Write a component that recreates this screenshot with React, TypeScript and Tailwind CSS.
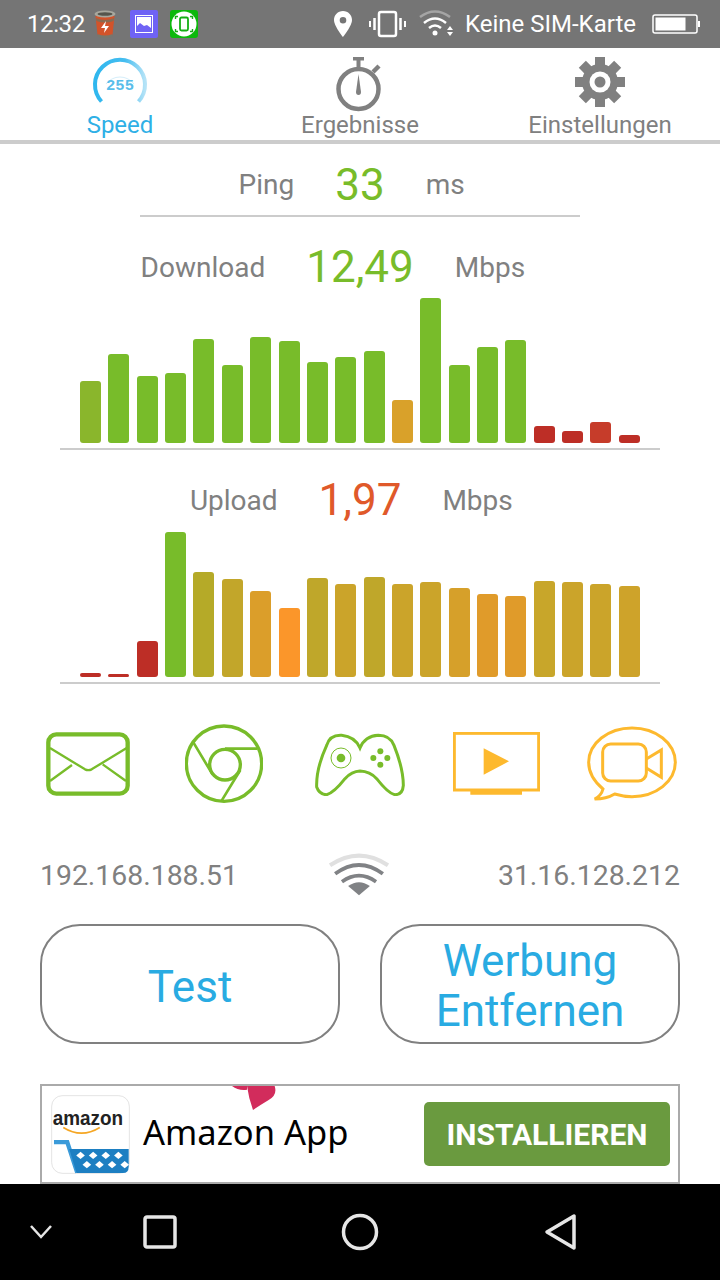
import React from 'react';

const G = '#78bc2a';
const R = '#bd2e26';

const downloadBars: [number, string][] = [
  [62, '#8ab62c'], [89, G], [67, G], [70, G], [104, G], [78, G], [106, G], [102, G], [81, G], [86, G],
  [92, G], [43, '#d9a12a'], [145, G], [78, G], [96, G], [103, G], [17, R], [12, R], [21, '#c63c2a'], [8, R],
];

const uploadBars: [number, string][] = [
  [4, R], [3, R], [36, R], [145, G], [105, '#b5aa28'], [98, '#c2a62a'], [86, '#db9e2a'], [69, '#fb962a'], [99, '#bfa72a'], [93, '#cba42a'],
  [100, '#bfa72a'], [93, '#cba42a'], [95, '#cba42a'], [89, '#d6a02a'], [83, '#e09b2a'], [81, '#e09b2a'], [96, '#c8a62a'], [95, '#cba42a'], [93, '#cba42a'], [91, '#cea32a'],
];

const Bars: React.FC<{ data: [number, string][]; height: string }> = ({ data, height }) => (
  <div className="w-[600px] mx-auto border-b-2 border-[#cccccc] pb-[5px]">
    <div className={`flex items-end justify-between w-[560px] ml-[20px] ${height}`}>
      {data.map(([h, color], i) => (
        <div
          key={i}
          className="w-[21px] rounded-[3px]"
          style={{ height: h, backgroundColor: color }}
        />
      ))}
    </div>
  </div>
);

// value stays centred on the page, labels hang left and right of it
const Reading: React.FC<{ label: string; value: string; unit: string; color: string }> = ({ label, value, unit, color }) => (
  <div className="grid grid-cols-[1fr_auto_1fr] items-center gap-[41px] h-[40px] pt-[1px] leading-[39px] text-[28px] text-[#808080]">
    <span className="text-right">{label}</span>
    <span className="text-[44px]" style={{ color }}>{value}</span>
    <span>{unit}</span>
  </div>
);

const StatusBar = () => (
  <div className="h-[48px] bg-[#757575] flex items-center text-white text-[24px] pl-[27px]">
    <span className="w-[64px] tracking-[-0.4px]">12:32</span>
    <svg width="24" height="30" viewBox="0 0 24 30" className="ml-[2px]">
      <path d="M2.500 7h19l-2 19q-7.500 3-15 0z" fill="#d2532a" />
      <ellipse cx="12" cy="5" rx="10.500" ry="3.500" fill="#a8a89e" />
      <ellipse cx="12" cy="5" rx="7.500" ry="1.800" fill="#55554c" />
      <path d="M3 9q9 4 18 0l-.4 3q-8.600 3-17.200 0z" fill="#8a6a50" />
      <path d="M13 12l-5 7h4l-1 5 5-7h-4z" fill="#fff" />
      <path d="M4.500 25q7.500 3 15 0l-.5 3q-7 2-14 0z" fill="#77776c" />
    </svg>
    <svg width="28" height="28" viewBox="0 0 28 28" className="ml-[13px]">
      <rect width="28" height="28" rx="2" fill="#6f63f5" />
      <rect x="5" y="5" width="18" height="18" fill="#fff" />
      <path d="M7 21v-5l3-3 4 3 3-1 4 3v3z" fill="#6f63f5" />
      <rect x="6.500" y="6.500" width="15" height="15" fill="none" stroke="#6f63f5" strokeWidth="1" />
    </svg>
    <svg width="28" height="28" viewBox="0 0 28 28" className="ml-[12px]">
      <rect width="28" height="28" rx="3" fill="#0cb80c" />
      <circle cx="14" cy="14" r="12.500" fill="#fff" />
      <rect x="10" y="7.500" width="8" height="13" rx="1.500" fill="none" stroke="#14ae14" strokeWidth="1.800" />
      <path d="M5.500 9V6.500H8M20 6.500h2.500V9M5.500 19v2.500H8M20 21.500h2.500V19" fill="none" stroke="#14ae14" strokeWidth="1.400" />
    </svg>
    <svg width="20" height="28" viewBox="0 0 20 28" className="ml-[135px]">
      <path fillRule="evenodd" d="M10 1C4.800 1 1 5 1 10c0 6 9 17 9 17s9-11 9-17c0-5-3.800-9-9-9zm0 6a3.300 3.300 0 1 1 0 6.600A3.300 3.300 0 0 1 10 7z" fill="#fff" />
    </svg>
    <svg width="37" height="28" viewBox="0 0 37 28" className="ml-[16px]">
      <rect x="10" y="2" width="17" height="24" rx="2" fill="none" stroke="#fff" strokeWidth="2.500" />
      <path d="M5.500 8v12M31.500 8v12" stroke="#fff" strokeWidth="2.500" />
      <path d="M1 11v6M36 11v6" stroke="#fff" strokeWidth="2" />
    </svg>
    <svg width="36" height="28" viewBox="0 0 36 28" className="ml-[13px]">
      <path d="M1 7Q16-4 31 7" fill="none" stroke="#a5a5a5" strokeWidth="2.500" />
      <path d="M5 13Q16 4 27 13" fill="none" stroke="#fff" strokeWidth="2.500" />
      <path d="M10 18q6-5 12 0" fill="none" stroke="#fff" strokeWidth="2.500" />
      <circle cx="16" cy="23" r="2.500" fill="#fff" />
      <path d="M28 20l3-4 3 4zM28 22l3 4 3-4z" fill="#fff" />
    </svg>
    <span className="ml-[10px]">Keine SIM-Karte</span>
    <svg width="48" height="20" viewBox="0 0 48 20" className="ml-[16px]">
      <rect x="1" y="1" width="44" height="18" rx="2" fill="none" stroke="#fff" strokeWidth="1.500" />
      <rect x="3.500" y="3.500" width="30" height="13" fill="#fff" />
      <rect x="46" y="7" width="2" height="6" fill="#fff" />
    </svg>
  </div>
);

const Tabs = () => (
  <div className="h-[96px] border-b-4 border-[#cccccc] grid grid-cols-3 text-[24px] text-[#808080] leading-[28px] text-center">
    <div className="flex flex-col items-center text-[#2fb0e6]">
      <svg width="60" height="60" viewBox="0 0 60 60" className="mt-[6px] mb-[-3px]">
        <defs>
          <linearGradient id="gauge" x1="0" x2="1" y1="0" y2="0">
            <stop offset="0" stopColor="#2fb7ee" />
            <stop offset="0.6" stopColor="#45bdf0" />
            <stop offset="1" stopColor="#b5e3f7" />
          </linearGradient>
        </defs>
        <path d="M11.500 47.500A25 25 0 1 1 48.500 47.500" fill="none" stroke="url(#gauge)" strokeWidth="4" />
        <path d="M16 36A17.500 17.500 0 0 1 44 36" fill="none" stroke="#d5eefa" strokeWidth="1" transform="translate(0 -6)" />
        <text x="16" y="36" fontSize="15" fontWeight="700" fontFamily="'Liberation Mono', monospace" textLength="28" lengthAdjust="spacingAndGlyphs" fill="#58bdea">255</text>
      </svg>
      <span>Speed</span>
    </div>
    <div className="flex flex-col items-center">
      <svg width="60" height="60" viewBox="0 -3 60 60" className="mt-[6px] mb-[-3px]">
        <circle cx="28.500" cy="32" r="20" fill="none" stroke="#808080" strokeWidth="4.500" />
        <rect x="23" y="0" width="11" height="3.500" fill="#808080" />
        <rect x="26.500" y="2" width="4" height="10" fill="#808080" />
        <path d="M43 15l6-6" stroke="#808080" strokeWidth="4.500" />
        <path d="M28.500 17l2.500 18a2.500 3 0 0 1-5 0z" fill="#808080" />
      </svg>
      <span>Ergebnisse</span>
    </div>
    <div className="flex flex-col items-center">
      <svg width="60" height="60" viewBox="-30 -30 60 60" className="mt-[6px] mb-[-3px]">
        <g transform="translate(0 -2)" fill="#808080">
          {[0, 45, 90, 135, 180, 225, 270, 315].map(a => (
            <rect key={a} x="-5" y="-25" width="10" height="10" transform={`rotate(${a})`} />
          ))}
          <circle r="18" />
          <circle r="10.500" fill="#fff" />
          <circle r="5.500" />
        </g>
      </svg>
      <span>Einstellungen</span>
    </div>
  </div>
);

const ServiceIcons = () => (
  <div className="flex items-center h-[72px] mt-[44px] pl-[46px]">
    <svg width="84" height="64" viewBox="0 0 252 192">
      <rect x="7" y="7" width="238" height="178" rx="24" fill="none" stroke={G} strokeWidth="13" />
      <path d="M12 48l105 64q10 5 20 0l105-64M12 147l66-48M240 147l-70-50" fill="none" stroke={G} strokeWidth="7" />
    </svg>
    <svg width="78" height="80" viewBox="465 28 234 240" className="ml-[55px]">
      <circle cx="582" cy="147" r="113" fill="none" stroke={G} strokeWidth="10" />
      <circle cx="585" cy="150" r="46" fill="none" stroke={G} strokeWidth="10" />
      <path d="M490 83l58 97M585 102h96M575 258l56-92" fill="none" stroke={G} strokeWidth="8" />
    </svg>
    <svg width="90" height="64" viewBox="855 50 270 192" className="ml-[52px]">
      <path d="M990 98Q975 64 935 60Q900 58 890 90Q858 160 860 215Q868 238 890 238Q912 232 945 190Q965 168 990 167Q1020 168 1040 190Q1075 235 1095 238Q1118 238 1120 210Q1120 160 1092 90Q1080 60 1045 60Q1005 62 990 98Z" fill="none" stroke={G} strokeWidth="9" />
      <circle cx="933" cy="128" r="30" fill="none" stroke={G} strokeWidth="3" />
      <circle cx="933" cy="128" r="13" fill={G} />
      <circle cx="1030" cy="128" r="9" fill={G} />
      <circle cx="1072" cy="128" r="9" fill={G} />
      <circle cx="1051" cy="108" r="9" fill={G} />
      <circle cx="1051" cy="148" r="9" fill={G} />
    </svg>
    <svg width="87" height="64" viewBox="68 54 261 192" className="ml-[48px]">
      <rect x="72" y="58" width="253" height="170" fill="none" stroke="#fdb92e" strokeWidth="9" />
      <path d="M120 228h155v14H120zM160 103l76 39-76 40z" fill="#fdb92e" />
    </svg>
    <svg width="90" height="76" viewBox="472 36 270 228" className="ml-[47px]">
      <path d="M520 225C490 200 477 175 477 145C477 88 535 42 607 42C679 42 737 88 737 145C737 202 679 248 607 248C590 248 572 245 555 240Q530 255 495 255Q515 245 520 225Z" fill="none" stroke="#fdb92e" strokeWidth="9" />
      <rect x="519" y="90" width="131" height="111" rx="24" fill="none" stroke="#fdb92e" strokeWidth="9" />
      <path d="M650 135l45-27v82l-45-28" fill="none" stroke="#fdb92e" strokeWidth="9" />
    </svg>
  </div>
);

const AmazonIcon = () => (
  <svg width="79" height="79" viewBox="63 58 238 238">
    <rect x="65" y="60" width="234" height="234" rx="32" fill="#fff" stroke="#d4d4d4" strokeWidth="2" />
    <text x="68" y="148" fontSize="60" fontWeight="700" fontFamily="'Liberation Sans', sans-serif" textLength="212" lengthAdjust="spacingAndGlyphs" fill="#222">amazon</text>
    <path d="M100 156Q155 190 210 156" fill="none" stroke="#f5a623" strokeWidth="5" />
    <path d="M72 200h40l30 92" fill="none" stroke="#3a9ad9" strokeWidth="13" />
    <path d="M118 221H297V274Q297 293 280 293H140z" fill="#1d7fc2" />
    {[152, 190, 228, 266].map(x => (
      <path key={x} d="M0-11L13 0 0 11-13 0z" fill="#fff" transform={`translate(${x} 240)`} />
    ))}
    {[171, 209, 247, 285].map(x => (
      <path key={x} d="M0-11L13 0 0 11-13 0z" fill="#fff" transform={`translate(${x} 268)`} />
    ))}
  </svg>
);

const Ad = () => (
  <div className="relative overflow-hidden h-[100px] mt-[40px] mx-[40px] border-2 border-[#aaaaaa] flex items-center pl-[9px] pr-[8px]">
    <AmazonIcon />
    <span className="ml-[13px] text-[34.500px] text-black font-['Noto_Sans'] mb-[4px]">Amazon App</span>
    <button className="ml-auto w-[246px] h-[64px] rounded-[5px] bg-[#6a9a3f] text-white text-[30px] font-bold">
      INSTALLIEREN
    </button>
    <svg width="45" height="25" viewBox="605 33 135 75" className="absolute left-[190px] top-0">
      <path d="M605 33H650V44Q625 48 605 33Z" fill="#d22c5c" />
      <path d="M650 33H733Q742 60 715 75Q690 90 668 105Q655 70 650 33Z" fill="#d22c5c" />
    </svg>
  </div>
);

const NavBar = () => (
  <div className="h-[96px] bg-black flex items-center pl-[30px]">
    <svg width="22" height="14" viewBox="0 0 22 14">
      <path d="M1 1l10 11L21 1" fill="none" stroke="#e6e6e6" strokeWidth="2.500" />
    </svg>
    <svg width="34" height="34" viewBox="0 0 34 34" className="ml-[91px]">
      <rect x="2" y="2" width="30" height="30" rx="2" fill="none" stroke="#e6e6e6" strokeWidth="3.500" />
    </svg>
    <svg width="38" height="38" viewBox="0 0 38 38" className="ml-[164px]">
      <circle cx="19" cy="19" r="16.500" fill="none" stroke="#e6e6e6" strokeWidth="3.500" />
    </svg>
    <svg width="34" height="38" viewBox="0 0 34 38" className="ml-[165px]">
      <path d="M3 19L30 3v32z" fill="none" stroke="#e6e6e6" strokeWidth="3.500" strokeLinejoin="round" />
    </svg>
  </div>
);

export default function App() {
  return (
    <div className="w-[720px] h-[1280px] overflow-hidden bg-white font-[Roboto,sans-serif]">
      <StatusBar />
      <Tabs />

      <div className="pt-[11px]">
        <div className="w-[440px] mx-auto h-[62px] border-b-2 border-[#cccccc] grid grid-cols-[1fr_auto_1fr] content-center items-center gap-[41px] leading-[40px] text-[28px] text-[#808080]">
          <span className="text-right">Ping</span>
          <span className="text-[44px] text-[#78bc2a]">33</span>
          <span>ms</span>
        </div>
      </div>

      <div className="mt-[30px]">
        <Reading label="Download" value="12,49" unit="Mbps" color="#78bc2a" />
        <Bars data={downloadBars} height="h-[156px]" />
      </div>

      <div className="mt-[30px]">
        <Reading label="Upload" value="1,97" unit="Mbps" color="#e0592a" />
        <Bars data={uploadBars} height="h-[157px]" />
      </div>

      <ServiceIcons />

      <div className="flex items-center justify-between h-[40px] mt-[55px] pt-[2px] px-[40px] text-[28.400px] text-[#808080]">
        <span>192.168.188.51</span>
        <svg width="62" height="46" viewBox="900 410 180 135" className="mr-[18px] mt-[-4px]">
          <path d="M905 452Q990 395 1075 452" fill="none" stroke="#e0e0e0" strokeWidth="12" />
          <path d="M920 477Q990 425 1060 477" fill="none" stroke="#808285" strokeWidth="11" />
          <path d="M940 500Q990 465 1040 500" fill="none" stroke="#808285" strokeWidth="11" />
          <path d="M958 513Q990 490 1022 513L990 540z" fill="#808285" />
        </svg>
        <span>31.16.128.212</span>
      </div>

      <div className="flex justify-between mt-[29px] px-[40px] text-[44px] text-[#29abe2] leading-[50px] text-center">
        <button className="w-[300px] h-[120px] pt-[5px] rounded-[40px] border-2 border-[#808080]">Test</button>
        <button className="w-[300px] h-[120px] pt-[4px] rounded-[40px] border-2 border-[#808080]">
          Werbung
          <br />
          Entfernen
        </button>
      </div>

      <Ad />
      <NavBar />
    </div>
  );
}
